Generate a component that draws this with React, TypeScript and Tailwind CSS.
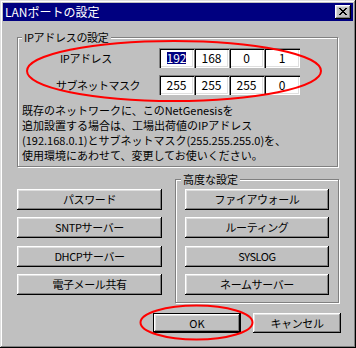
import React from "react";

const raised =
  "shadow-[inset_-1px_-1px_#000,inset_1px_1px_#fff,inset_-2px_-2px_#808080,inset_2px_2px_#dfdfdf]";
const etched =
  "border border-[#808080] shadow-[1px_1px_0_#fff,inset_1px_1px_0_#fff]";
const sunken =
  "shadow-[inset_1px_1px_#808080,inset_2px_2px_#000,inset_-1px_-1px_#fff,inset_-2px_-2px_#dfdfdf]";

function Btn({ label, className = "" }: { label: string; className?: string }) {
  return (
    <div
      className={`h-[21px] flex items-center justify-center bg-[#c0c0c0] text-[11px] leading-[13px] tracking-[-0.4px] text-black whitespace-nowrap ${raised} ${className}`}
    >
      {label}
    </div>
  );
}

function Field({ v, sel = false, w = "w-[35px]" }: { v: string; sel?: boolean; w?: string }) {
  return (
    <div className={`${w} h-[20px] bg-white flex items-center justify-center text-[12px] leading-[12px] ${sunken}`}>
      {sel ? (
        <span className="bg-[#000080] text-white leading-[12px]">{v}</span>
      ) : (
        <span>{v}</span>
      )}
    </div>
  );
}

export default function App() {
  return (
    <div className="relative w-[356px] h-[348px] bg-[#c0c0c0] p-[3px] shadow-[inset_-1px_-1px_#000,inset_1px_1px_#dfdfdf,inset_-2px_-2px_#808080,inset_2px_2px_#fff] font-['Noto_Sans_CJK_JP',sans-serif] text-black overflow-hidden">
      {/* title bar */}
      <div className="h-[18px] bg-[#000080] flex items-center justify-between pl-[2px] pr-[2px]">
        <span className="text-white text-[12px] leading-[14px] whitespace-nowrap">LANポートの設定</span>
        <div className={`w-[16px] h-[14px] bg-[#c0c0c0] flex items-center justify-center ${raised}`}>
          <svg width="8" height="7" viewBox="0 0 8 7" className="mt-[-1px]">
            <path d="M0 0h2v1h1v1h2v-1h1v-1h2v1h-1v1h-1v1h-1v1h1v1h1v1h1v1h-2v-1h-1v-1h-2v1h-1v1h-2v-1h1v-1h1v-1h1v-1h-1v-1h-1v-1h-1z" fill="#000" />
          </svg>
        </div>
      </div>

      {/* content */}
      <div className="ml-[14px] mt-[16px]">
        {/* IP group */}
        <div className={`relative w-[321px] h-[130px] ${etched}`}>
          <span className="absolute left-[4px] top-[-8px] px-[2px] bg-[#c0c0c0] text-[11px] leading-[14px] tracking-[-0.3px] whitespace-nowrap">
            IPアドレスの設定
          </span>
          <div className="mt-[10px] flex items-center h-[20px]">
            <div className="w-[141px] pl-[42px] text-[11px] leading-[14px] tracking-[-0.4px] whitespace-nowrap">IPアドレス</div>
            <div className="flex">
              <Field v="192" sel />
              <Field v="168" />
              <Field v="0" />
              <Field v="1" w="w-[36px]" />
            </div>
          </div>
          <div className="mt-[7px] flex items-center h-[20px]">
            <div className="w-[141px] pl-[38px] text-[11px] leading-[14px] tracking-[-0.5px] whitespace-nowrap">サブネットマスク</div>
            <div className="flex">
              <Field v="255" />
              <Field v="255" />
              <Field v="255" />
              <Field v="0" w="w-[36px]" />
            </div>
          </div>
          <div className="mt-[8px] ml-[4px] text-[11px] leading-[15px] whitespace-nowrap">
            <div>既存のネットワークに、このNetGenesisを</div>
            <div>追加設置する場合は、工場出荷値のIPアドレス</div>
            <div>(192.168.0.1)とサブネットマスク(255.255.255.0)を、</div>
            <div>使用環境にあわせて、変更してお使いください。</div>
          </div>
        </div>

        {/* middle */}
        <div className="mt-[12px] flex items-start">
          <div className="w-[145px] pt-[10px] flex flex-col">
            <Btn label="パスワード" />
            <Btn label="SNTPサーバー" className="mt-[7px]" />
            <Btn label="DHCPサーバー" className="mt-[8px]" />
            <Btn label="電子メール共有" className="mt-[7px]" />
          </div>
          <div className={`relative ml-[13px] w-[164px] h-[124px] ${etched}`}>
            <span className="absolute left-[5px] top-[-8px] px-[2px] bg-[#c0c0c0] text-[11px] leading-[14px] whitespace-nowrap">
              高度な設定
            </span>
            <div className="pl-[9px] pt-[9px] flex flex-col w-[153px]">
              <Btn label="ファイアウォール" />
              <Btn label="ルーティング" className="mt-[7px]" />
              <Btn label="SYSLOG" className="mt-[8px]" />
              <Btn label="ネームサーバー" className="mt-[7px]" />
            </div>
          </div>
        </div>

        {/* bottom buttons */}
        <div className="mt-[10px] flex pl-[136px]">
          <div className="w-[88px] h-[20px] border border-black">
            <div className={`h-full flex items-center justify-center text-[11px] leading-[13px] ${raised}`}>OK</div>
          </div>
          <div className={`ml-[12px] w-[88px] h-[20px] flex items-center justify-center text-[11px] leading-[13px] tracking-[-0.4px] ${raised}`}>
            キャンセル
          </div>
        </div>
      </div>

      {/* red annotations */}
      <svg className="absolute left-0 top-0 pointer-events-none" width="356" height="348">
        <ellipse cx="174" cy="71" rx="147" ry="30" fill="none" stroke="#ff0000" strokeWidth="2" />
        <ellipse cx="196.5" cy="322.5" rx="56" ry="17" fill="none" stroke="#ff0000" strokeWidth="2" />
      </svg>
    </div>
  );
}
